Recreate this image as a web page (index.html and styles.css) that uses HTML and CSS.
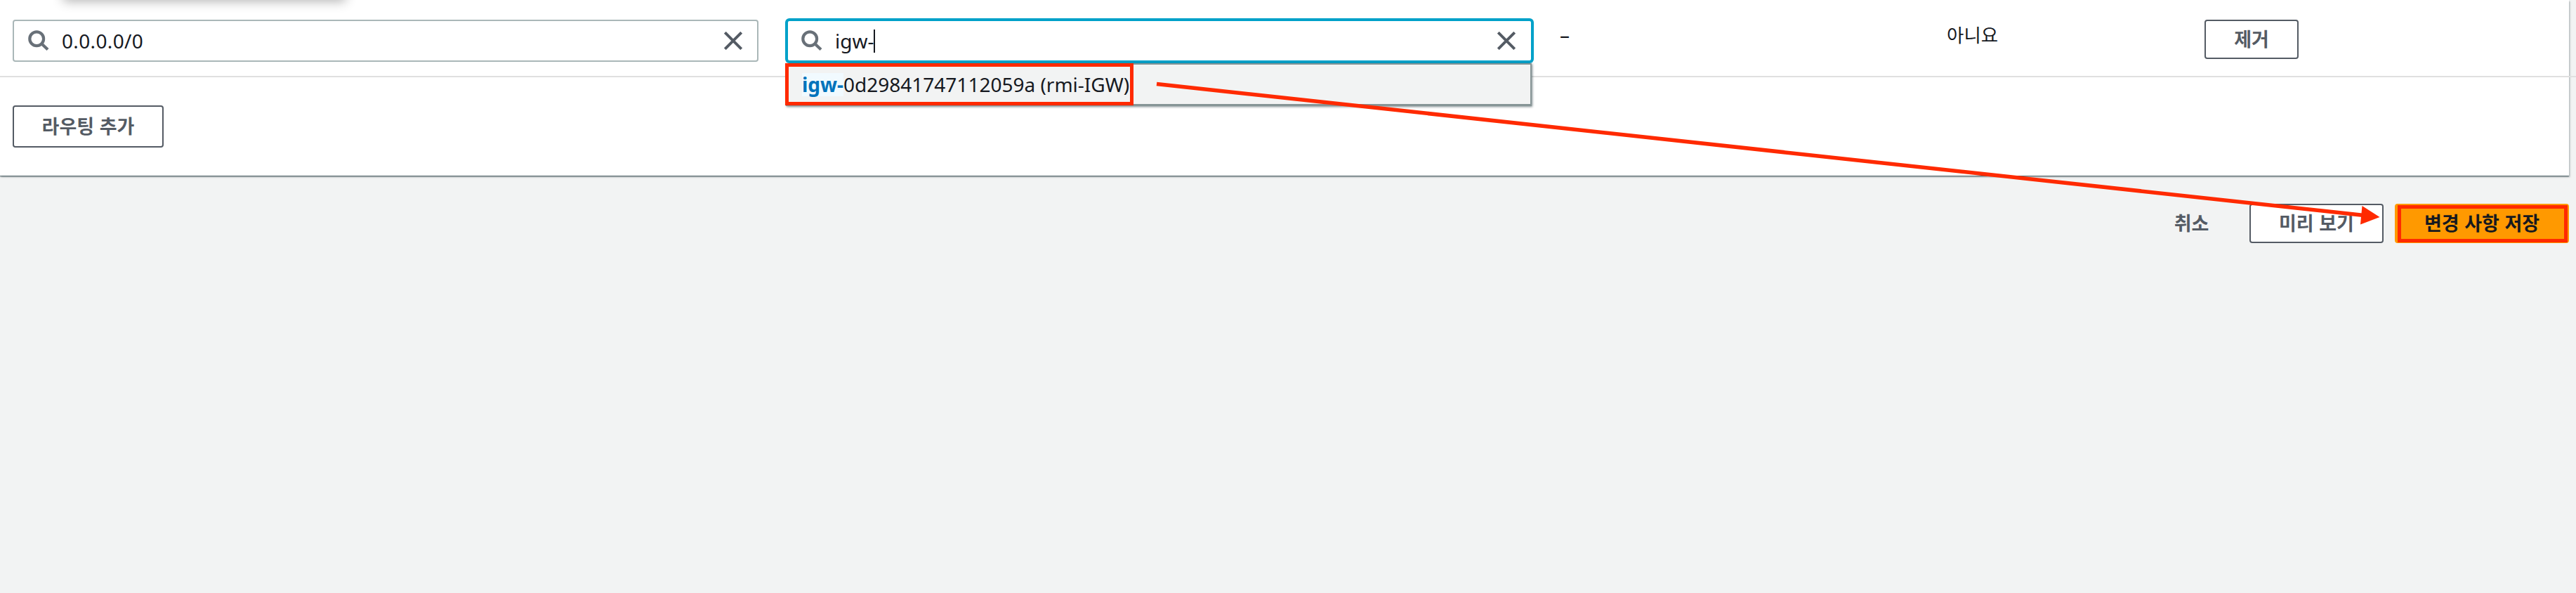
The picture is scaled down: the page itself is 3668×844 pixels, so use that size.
FILE: index.html
```html
<!DOCTYPE html>
<html lang="ko">
<head>
<meta charset="utf-8">
<title>라우팅 편집</title>
<link rel="stylesheet" href="styles.css">
</head>
<body>
<main class="page">
  <section class="panel">
    <div class="popup-shadow"></div>
    <div class="route-row">
      <div class="field">
        <svg class="search" viewBox="0 0 30 30"><circle cx="12.2" cy="12.2" r="9.9"/><path d="M19 19l9 8.6"/></svg>
        <span class="value address">0.0.0.0/0</span>
        <svg class="clear" viewBox="0 0 26 26"><path d="M1.3 1.3l23.4 23.4M24.7 1.3L1.3 24.7"/></svg>
      </div>
      <div class="target">
        <div class="field field-focused">
          <svg class="search" viewBox="0 0 30 30"><circle cx="12.2" cy="12.2" r="9.9"/><path d="M19 19l9 8.6"/></svg>
          <span class="value">igw-</span><span class="caret"></span>
          <svg class="clear" viewBox="0 0 26 26"><path d="M1.3 1.3l23.4 23.4M24.7 1.3L1.3 24.7"/></svg>
        </div>
        <div class="dropdown"><span class="option"><mark class="match">igw-</mark>0d29841747112059a (rmi-IGW)</span></div>
        <div class="option-outline"></div>
      </div>
      <span class="status">–</span>
      <span class="propagated">아니요</span>
      <button class="button remove">제거</button>
    </div>
    <div class="panel-footer"><button class="button add">라우팅 추가</button></div>
  </section>
  <footer class="actions">
    <button class="button cancel">취소</button>
    <button class="button preview">미리 보기</button>
    <button class="button save">변경 사항 저장</button>
  </footer>
  <svg class="arrow" viewBox="0 0 3668 844"><path class="arrow-line" d="M1647 119.5L3366 306.5"/><path class="arrow-head" d="M3363.5 293L3388.5 309L3361 319.5z"/></svg>
</main>
</body>
</html>
```
FILE: styles.css
```css
*, *::before, *::after { box-sizing: border-box; }
body {
  margin: 0;
  background: #f2f3f3;
  color: #16191f;
  font: 28px/40px "Noto Sans", "Noto Sans CJK KR", sans-serif;
}
.page { position: relative; width: 3668px; height: 844px; overflow: hidden; }
.panel {
  position: relative;
  width: 3658px;
  height: 250px;
  background: #fff;
  box-shadow: 0 2px 2px rgba(0, 28, 36, .3), 2px 2px 2px rgba(0, 28, 36, .15), 0 1px 0 #879596;
}
.popup-shadow {
  position: absolute;
  left: 90px;
  top: -30px;
  width: 402px;
  height: 30px;
  box-shadow: 0 2px 16px rgba(0, 0, 0, .3);
}
.route-row {
  display: grid;
  grid-template-columns: 1062px 1062px 510px 327px 134px;
  column-gap: 40px;
  align-items: start;
  width: 3668px;
  height: 110px;
  padding: 28px 0 0 18px;
  border-bottom: 2px solid #e0e0e0;
}
.field {
  display: flex;
  align-items: center;
  height: 60px;
  padding: 0 21px 0 20px;
  border: 2px solid #aab7b8;
  border-radius: 4px;
  background: #fff;
}
.field-focused { padding: 0 22px 0 19px; border-color: #00a1c9; box-shadow: 0 0 0 2px #00a1c9; }
.search { width: 30px; height: 30px; fill: none; stroke: #687078; stroke-width: 4.2; }
.value { margin-left: 18px; }
.address { letter-spacing: .35px; }
.clear { width: 26px; height: 26px; margin-left: auto; fill: none; stroke: #545b64; stroke-width: 4; }
.caret { width: 2px; height: 33px; background: #16191f; }
.target { position: relative; }
.dropdown {
  position: absolute;
  left: -1px;
  top: 62px;
  width: 1062px;
  height: 61px;
  padding: 8px 21px;
  border: 2px solid #879596;
  border-bottom-width: 3px;
  background: #f2f3f3;
  box-shadow: 1px 1px 3px rgba(0, 28, 36, .5);
  white-space: nowrap;
}
.option { line-height: 38px; }
.match { padding: 0; background: linear-gradient(#f1faff, #f1faff) center / 100% 33px no-repeat; color: #0073bb; font-weight: 700; }
.option-outline {
  position: absolute;
  left: -2px;
  top: 62px;
  width: 496px;
  height: 60px;
  border: 5px solid #ff2a00;
}
.status { margin-left: -1px; line-height: 43px; }
.propagated { font: 26.5px/42px "Noto Sans CJK KR", sans-serif; }
.button {
  height: 56px;
  padding: 0 0 2px;
  border: 2px solid #545b64;
  border-radius: 4px;
  background: #fff;
  color: #545b64;
  font: 700 27px/48px "Noto Sans CJK KR", sans-serif;
  white-space: nowrap;
}
.panel-footer { padding: 40px 18px; }
.add { width: 215px; height: 60px; }
.actions { display: flex; justify-content: flex-end; padding: 40px 10px 0 0; }
.cancel { width: 133px; margin-right: 16px; border-color: transparent; background: transparent; }
.preview { width: 191px; margin-right: 16px; }
.save { position: relative; width: 248px; border-color: #f90; background: #f90; color: #16191f; }
.save::after {
  content: "";
  position: absolute;
  left: 2px;
  top: 0;
  width: 242px;
  height: 53px;
  border: 5px solid #ff2a00;
}
.arrow { position: absolute; left: 0; top: 0; width: 3668px; height: 844px; pointer-events: none; }
.arrow-line { stroke: #ff2a00; stroke-width: 5.5; }
.arrow-head { fill: #ff2a00; }
```
